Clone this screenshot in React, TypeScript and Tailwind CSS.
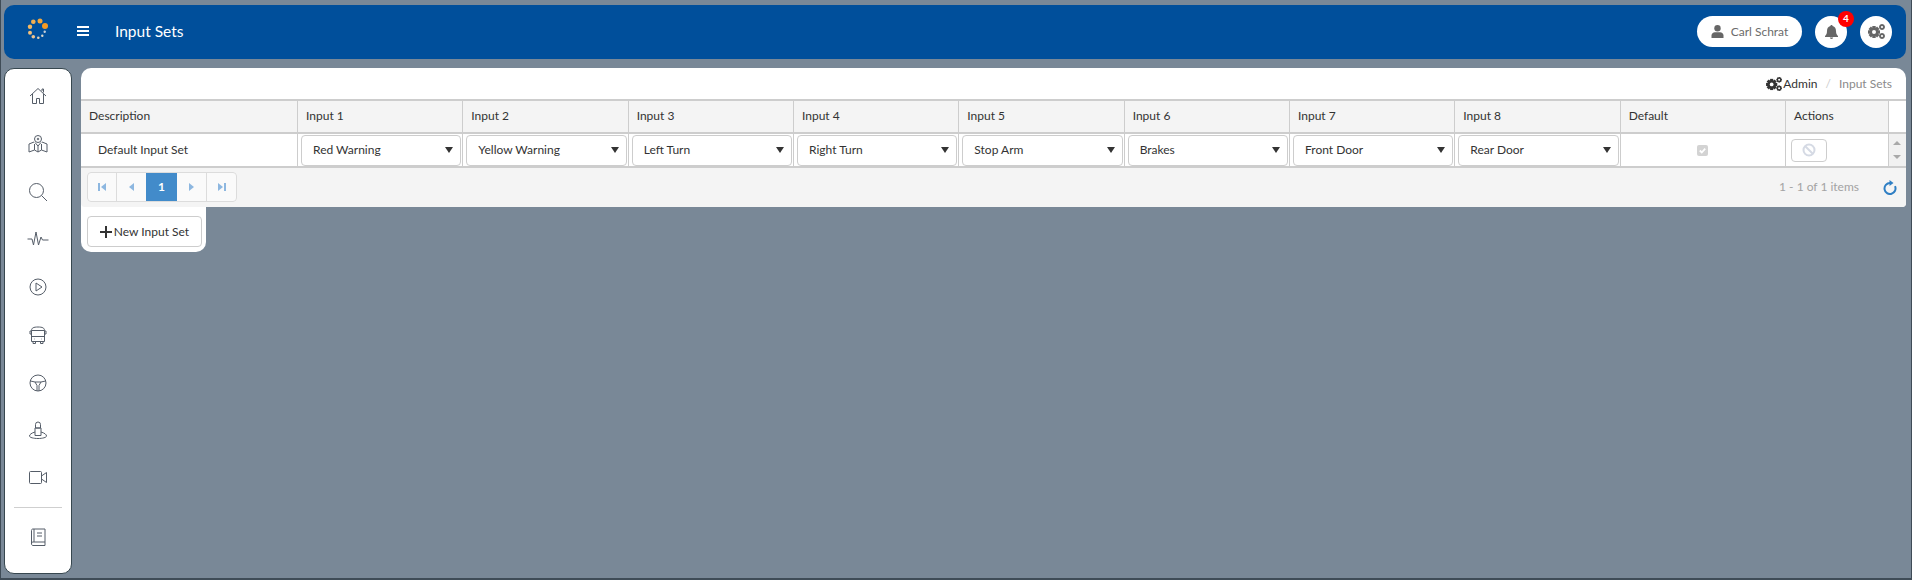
const font = "font-['Lato','Noto_Sans',sans-serif]";

const inputs = ["Red Warning", "Yellow Warning", "Left Turn", "Right Turn", "Stop Arm", "Brakes", "Front Door", "Rear Door"];

const stroke = "#555d68";

function Cog({ x, y, r, hole }: { x: number; y: number; r: number; hole: number }) {
    const teeth = [0, 45, 90, 135];
    return (
        <g>
            {teeth.map((a) => (
                <rect key={a} x={x - r * 0.28} y={y - r} width={r * 0.56} height={r * 2} transform={`rotate(${a} ${x} ${y})`} />
            ))}
            <circle cx={x} cy={y} r={r * 0.76} />
            <circle cx={x} cy={y} r={hole} fill="white" />
        </g>
    );
}

function Gears({ className }: { className?: string }) {
    return (
        <svg viewBox="0 0 17 15" className={className} fill="currentColor">
            <Cog x={6} y={8} r={6} hole={2} />
            <Cog x={14} y={3} r={3} hole={1.1} />
            <Cog x={14} y={12} r={3} hole={1.1} />
        </svg>
    );
}

function Logo() {
    const dots = [
        [18, 8, 3, "#f59a23"], [13, 3, 2.500, "#f5a83c"], [6.300, 3.700, 2.300, "#f5b050"], [3, 8.700, 2.200, "#f4b862"],
        [3, 14.700, 2, "#f2c07a"], [6.300, 18.700, 1.800, "#efc490"], [11.300, 19.700, 1.300, "#e8d0b0"], [15.300, 17.700, 1.200, "#dcd8cc"], [17.700, 13.700, 1.200, "#c8d0d8"],
    ] as const;
    return (
        <svg viewBox="0 0 22 22" className="w-[22px] h-[22px]">
            {dots.map(([cx, cy, r, fill]) => (
                <circle key={`${cx}-${cy}`} cx={cx} cy={cy} r={r} fill={fill} />
            ))}
        </svg>
    );
}

function NavSvg({ children, w = 20, h = 20 }: { children: React.ReactNode; w?: number; h?: number }) {
    return (
        <svg viewBox={`0 0 ${w} ${h}`} width={w} height={h} fill="none" stroke={stroke} strokeWidth="1">
            {children}
        </svg>
    );
}

const navIcons = [
    <NavSvg key="home"><path d="M2 10 10 2.500 18 10M4.500 8v9.500h4v-5h3v5h4V8M14 5V3h1.500v3.500" /></NavSvg>,
    <NavSvg key="map"><circle cx="10" cy="5" r="3.500" /><circle cx="10" cy="5" r=".8" /><path d="M7 8.500 10 12l3-3.500M6 8 1 10v8l5.500-2 3.500 2 3.500-2 5.500 2v-8l-5-2M6.500 10v6M13.500 10v6M10 12v6" /></NavSvg>,
    <NavSvg key="search"><circle cx="8.500" cy="8.500" r="7" /><path d="m13.500 13.500 5.500 5.500" /></NavSvg>,
    <NavSvg key="pulse" w={22} h={16}><path d="M0.500 8h4.500l1.500 6 2.500-13 2.500 13 2.500-8 1.500 3h6" /></NavSvg>,
    <NavSvg key="play"><circle cx="10" cy="10" r="8" /><path d="M8 6v8l6-4z" /></NavSvg>,
    <NavSvg key="bus"><path d="M3.500 5.500c0-2.500 2-3.500 6.500-3.500s6.500 1 6.500 3.500v11h-13zM3.500 11.500h13M3.500 5.500h13M2 6H3.500V9H2zM16.500 6H18V9h-1.500zM5 16.500v2h2.500v-2M12.500 16.500v2H15v-2M6 14h.5M13.500 14h.5" /></NavSvg>,
    <NavSvg key="wheel"><circle cx="10" cy="10" r="8" /><path d="m2.500 8 4.500 1h6l4.500-1M7 9l2 3.500V18M13 9l-2 3.500V18" /></NavSvg>,
    <NavSvg key="person"><path d="M7.500 8V4.500a2.500 2.500 0 0 1 5 0V8zM7 8h6v7.500H7z" /><path d="M7 12c-3.500 1-5.500 2.500-5.500 4 0 1.500 4 2.500 8.500 2.500s8.500-1 8.500-2.500c0-1.500-2-3-5.500-4" /></NavSvg>,
    <NavSvg key="video"><rect x="1.500" y="3.500" width="12" height="12" rx="1" /><path d="m13.500 8 5-3.500v10l-5-3.500" /></NavSvg>,
];

function Triangle() {
    return <span className="w-0 h-0 border-x-[4px] border-x-transparent border-t-[6px] border-t-[#333]" />;
}

function PagerIcon({ dir, bar }: { dir: "l" | "r"; bar?: boolean }) {
    return (
        <span className="flex items-center gap-px">
            {bar && dir === "l" && <span className="w-[2px] h-[8px] bg-[#8db7e0]" />}
            <span className={dir === "l" ? "w-0 h-0 border-y-[4px] border-y-transparent border-r-[5px] border-r-[#8db7e0]" : "w-0 h-0 border-y-[4px] border-y-transparent border-l-[5px] border-l-[#8db7e0]"} />
            {bar && dir === "r" && <span className="w-[2px] h-[8px] bg-[#8db7e0]" />}
        </span>
    );
}

function Sidebar() {
    return (
        <aside className="w-[68px] h-[506px] bg-white rounded-[10px] border border-[#37474f] flex flex-col items-center shrink-0 pt-[17px]">
            <div className="flex flex-col items-center gap-[27.750px]">
                {navIcons.map((icon) => (
                    <div key={icon.key} className="h-[20px] w-[22px] flex items-center justify-center">{icon}</div>
                ))}
            </div>
            <div className="w-[48px] h-px bg-[#cfcfcf] mt-[19px] mb-[19px]" />
            <NavSvg>
                <path d="M3.500 17V3.500c0-1 .5-1.500 1.500-1.500h12v13H5c-1 0-1.500.800-1.500 1.800S4 18.500 5 18.500h12V15M6 2v13M9 6h5M9 9h5" />
            </NavSvg>
        </aside>
    );
}

function Grid() {
    const cols = "grid grid-cols-[217px_repeat(9,minmax(0,1fr))_103px_17px]";
    const head = "pl-[8px] pb-[2px] flex items-center border-r border-[#cdcdcd]";
    return (
        <div className="border-t-2 border-[#cdcdcd] bg-[#f4f4f4] text-[#333] text-[12px]">
            <div className={`${cols} h-[31px]`}>
                <div className={head}>Description</div>
                {inputs.map((_, i) => (
                    <div key={i} className={head}>Input {i + 1}</div>
                ))}
                <div className={head}>Default</div>
                <div className={head}>Actions</div>
                <div className="bg-white" />
            </div>
            <div className={`${cols} h-[36px] border-y-2 border-[#cdcdcd] bg-white`}>
                <div className="pl-[17px] flex items-center border-r border-[#cdcdcd]">Default Input Set</div>
                {inputs.map((name) => (
                    <div key={name} className="pl-[3px] pr-[1px] flex items-center border-r border-[#cdcdcd]">
                        <div className="w-full h-[31px] rounded-[4px] border border-[#cdcdcd] flex items-center justify-between pl-[11px] pr-[7px]">
                            <span>{name}</span>
                            <Triangle />
                        </div>
                    </div>
                ))}
                <div className="flex items-center justify-center border-r border-[#cdcdcd]">
                    <span className="w-[11px] h-[11px] bg-[#d3d3d3] rounded-[2px] flex items-center justify-center">
                        <svg viewBox="0 0 10 10" className="w-[9px] h-[9px]" fill="none" stroke="white" strokeWidth="2"><path d="m2 5 2.200 2.200L8 3" /></svg>
                    </span>
                </div>
                <div className="pl-[5px] flex items-center border-r border-[#cdcdcd]">
                    <div className="w-[36px] h-[23px] rounded-[4px] border border-[#cdcdcd] flex items-center justify-center">
                        <svg viewBox="0 0 14 14" className="w-[14px] h-[14px]" fill="none" stroke="#d5dae4" strokeWidth="2"><circle cx="7" cy="7" r="5.500" /><path d="m3 3 8 8" /></svg>
                    </div>
                </div>
                <div className="bg-[#f1f1f1] flex flex-col items-center justify-between py-[7px]">
                    <span className="w-0 h-0 border-x-[4px] border-x-transparent border-b-[4px] border-b-[#a9a9a9]" />
                    <span className="w-0 h-0 border-x-[4px] border-x-transparent border-t-[4px] border-t-[#a9a9a9]" />
                </div>
            </div>
        </div>
    );
}

function Pager() {
    const cell = "h-[30px] bg-[#fafafa] border-r border-[#dcdcdc] flex items-center justify-center";
    return (
        <div className="h-[39px] bg-[#f4f4f4] rounded-b-[4px] flex justify-between pt-[4px] pl-[6px] pr-[9px]">
            <div className="flex h-[30px] rounded-[4px] overflow-hidden outline outline-[#dcdcdc] -outline-offset-1">
                <div className={`${cell} w-[30px]`}><PagerIcon dir="l" bar /></div>
                <div className="w-[29px] h-[30px] bg-[#fafafa] flex items-center justify-center"><PagerIcon dir="l" /></div>
                <div className="w-[31px] h-[30px] bg-[#428bca] text-white text-[12px] font-bold flex items-center justify-center">1</div>
                <div className={`${cell} w-[30px]`}><PagerIcon dir="r" /></div>
                <div className="w-[30px] h-[30px] bg-[#fafafa] flex items-center justify-center"><PagerIcon dir="r" bar /></div>
            </div>
            <div className="flex items-center gap-[24px] h-[30px]">
                <span className="text-[12px] text-[#a3a3a3]">1 - 1 of 1 items</span>
                <svg viewBox="0 0 14 15" className="w-[14px] h-[15px]" fill="none" stroke="#2f7fc4" strokeWidth="2">
                    <path d="M7 3A5.500 5.500 0 1 0 12 6.200" />
                    <path d="M6.500 0v6l4-3z" fill="#2f7fc4" stroke="none" />
                </svg>
            </div>
        </div>
    );
}

export default function App() {
    return (
        <div className={`${font} w-[1912px] h-[580px] bg-[#798897] border-l border-r border-b-2 border-[#3f4c57] pt-[5px] pl-[3px] pr-[5px] overflow-hidden`}>
            <header className="h-[54px] bg-[#004f9b] rounded-[10px] flex items-center text-white">
                <div className="ml-[23px] w-[22px] mb-[6px]"><Logo /></div>
                <div className="ml-[28px] flex flex-col gap-[2px] w-[12px] mb-[2px]">
                    <span className="h-[2px] bg-white" /><span className="h-[2px] bg-white" /><span className="h-[2px] bg-white" />
                </div>
                <h1 className="ml-[26px] text-[15.500px]">Input Sets</h1>
                <div className="ml-auto flex items-center gap-[13px] mr-[14px] mb-[1px]">
                    <div className="w-[105px] h-[31px] bg-white rounded-full flex items-center justify-center gap-[7px] text-[#6b6b6b] text-[12px]">
                        <svg viewBox="0 0 13 13" className="w-[13px] h-[13px]" fill="#666">
                            <circle cx="6.500" cy="3.200" r="3.200" />
                            <path d="M0.500 13v-2.500C.5 8.500 2 7.200 4 7.200h5c2 0 3.500 1.300 3.500 3.300V13z" />
                        </svg>
                        <span>Carl Schrat</span>
                    </div>
                    <div className="relative w-[32px] h-[32px] bg-white rounded-full flex items-center justify-center">
                        <svg viewBox="0 0 13 14" className="w-[13px] h-[14px]" fill="#666">
                            <path d="M6.500 0C7.200 0 7.600.5 7.600 1.100 10 1.600 11 3.500 11 6c0 3 1 4 2 5v1H0v-1c1-1 2-2 2-5 0-2.500 1-4.400 3.400-4.900C5.400.5 5.800 0 6.500 0zM4.800 12.600h3.400a1.700 1.400 0 0 1-3.400 0z" />
                        </svg>
                        <span className="absolute -top-[5px] -right-[7px] w-[16px] h-[16px] rounded-full bg-[#f00] text-white text-[10px] font-bold flex items-center justify-center">4</span>
                    </div>
                    <div className="w-[32px] h-[32px] bg-white rounded-full flex items-center justify-center text-[#666]">
                        <Gears className="w-[17px] h-[15px]" />
                    </div>
                </div>
            </header>
            <div className="flex items-start gap-[9px] mt-[9px]">
                <Sidebar />
                <main className="flex-1 min-w-0">
                    <div className="bg-white rounded-t-[10px] rounded-br-[4px]">
                        <div className="h-[31px] flex items-center justify-end gap-[8px] pr-[14px] text-[12px]">
                            <span className="flex items-center gap-[1px] text-[#333]"><Gears className="w-[16px] h-[14px]" />Admin</span>
                            <span className="text-[#ccc]">/</span>
                            <span className="text-[#8a8a8a]">Input Sets</span>
                        </div>
                        <Grid />
                        <Pager />
                    </div>
                    <div className="w-[125px] h-[45px] bg-white rounded-b-[10px] pt-[9px] pl-[6px]">
                        <button className="w-[115px] h-[31px] rounded-[4px] border border-[#cdcdcd] flex items-center justify-center gap-[2px] text-[12px] text-[#333]">
                            <svg viewBox="0 0 12 12" className="w-[12px] h-[12px]" fill="#333"><path d="M5 0h2v5h5v2H7v5H5V7H0V5h5z" /></svg>
                            New Input Set
                        </button>
                    </div>
                </main>
            </div>
        </div>
    );
}
